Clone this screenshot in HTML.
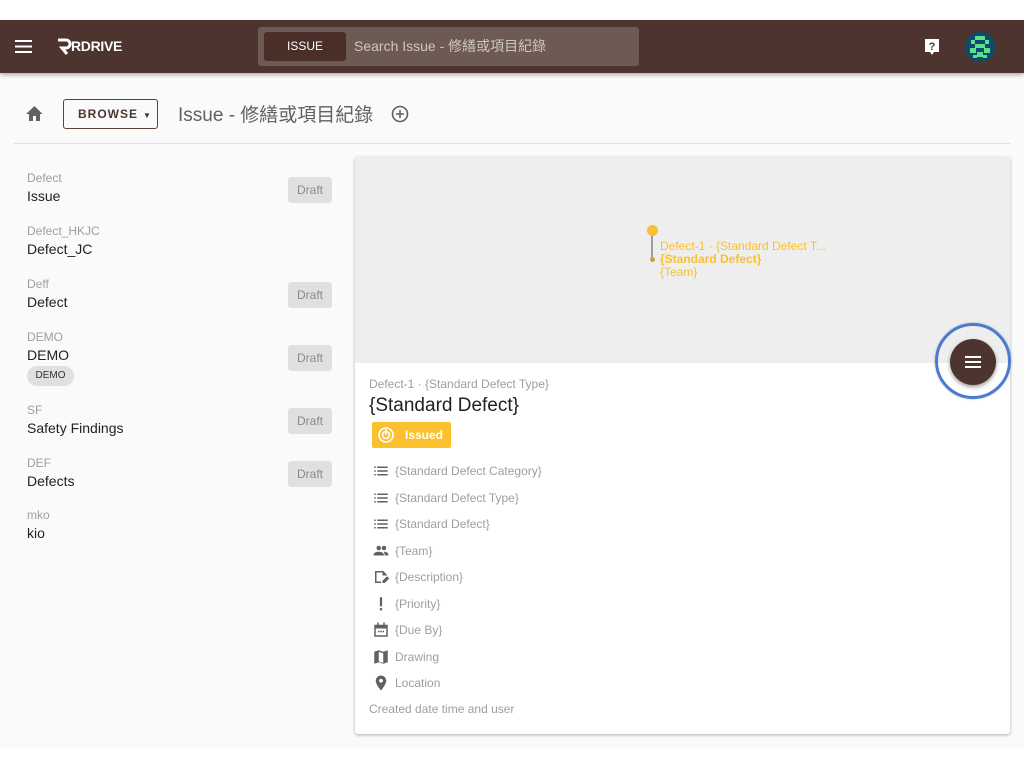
<!DOCTYPE html>
<html><head><meta charset="utf-8"><style>
*{box-sizing:border-box;margin:0;padding:0}
body{width:1024px;height:768px;background:#fff;font-family:"Liberation Sans","Noto Sans CJK TC",sans-serif;position:relative;overflow:hidden}
.page{position:absolute;top:20px;left:0;width:1024px;height:728px;background:#fafafa}
.hdr{position:absolute;top:0;left:0;width:1024px;height:53px;background:#4e342e;box-shadow:0 2px 4px rgba(0,0,0,.3)}
.abs{position:absolute}
.search{left:258px;top:7px;width:381px;height:39px;background:#6d5a52;border-radius:3px}
.issuebtn{left:6px;top:5px;width:82px;height:29px;background:#4a2f28;border-radius:3px;color:#fff;font-size:12px;text-align:center;line-height:29px}
.ph{left:96px;top:0;line-height:39px;color:#d0c6c2;font-size:14px}
.item .s{font-size:12px;color:#9e9e9e}
.item .m{font-size:14px;color:#212121;margin-top:3px}
.draft{position:absolute;left:288px;width:44px;height:26px;background:#e0e0e0;border-radius:3px;color:#8a8a8a;font-size:12px;text-align:center;line-height:26px}
.card{left:355px;top:137px;width:655px;height:577px;background:#fff;box-shadow:0 1px 3px rgba(0,0,0,.3);border-radius:3px;overflow:hidden}
.map{left:0;top:0;width:655px;height:206px;background:#eeeeee}
.row{position:absolute;left:17px;font-size:12px;color:#9e9e9e;display:flex;align-items:center}
.row svg{width:18px;height:18px;margin-right:5px;fill:#616161}
</style></head><body>
<div class="page">
<div class="hdr">
 <svg class="abs" style="left:15px;top:20px" width="17" height="13"><rect y="0" width="17" height="2" fill="#fff"/><rect y="5.5" width="17" height="2" fill="#fff"/><rect y="11" width="17" height="2" fill="#fff"/></svg>
 <svg class="abs" style="left:56px;top:17px" width="16" height="19" viewBox="0 0 16 19"><path d="M2 3h8a4 4 0 0 1 0 8H6l5 6" stroke="#fff" stroke-width="3" fill="none"/></svg>
 <div class="abs" style="left:71px;top:18px;color:#fff;font-size:14px;font-weight:bold;letter-spacing:-.3px">RDRIVE</div>
 <div class="abs search"><div class="abs issuebtn">ISSUE</div><div class="abs ph">Search Issue - 修繕或項目紀錄</div></div>
 <svg class="abs" style="left:924px;top:18px" width="16" height="18"><path d="M1 1h14v13h-5l-2 3-2-3H1z" fill="#fff"/><text x="8" y="12" font-size="11" font-weight="bold" text-anchor="middle" fill="#4e342e" font-family="Liberation Sans">?</text></svg>
 <svg class="abs" style="left:965px;top:12px" width="30" height="30"><circle cx="15" cy="15" r="15" fill="#0d4a6b"/><g fill="#5de08a"><rect x="10" y="4" width="10" height="4"/><rect x="6" y="8" width="4" height="4"/><rect x="20" y="8" width="4" height="4"/><rect x="10" y="12" width="10" height="4"/><rect x="5" y="16" width="6" height="5"/><rect x="19" y="16" width="6" height="5"/><rect x="12" y="20" width="6" height="5"/><rect x="8" y="23" width="4" height="3"/><rect x="18" y="23" width="4" height="3"/></g></svg>
</div>
<svg class="abs" style="left:26px;top:86px" width="17" height="15" viewBox="0 0 17 15"><path d="M7 15v-5h3v5h4V8h2.5L8.5 0 0 8h3v7z" fill="#616161"/></svg>
<div class="abs" style="left:63px;top:79px;width:95px;height:30px;border:1px solid #5d4037;border-radius:3px;font-size:12px;font-weight:bold;letter-spacing:1px;color:#4e342e;line-height:28px;padding-left:14px">BROWSE<span style="font-size:8px;margin-left:5px">▼</span></div>
<div class="abs" style="left:178px;top:80px;font-size:19px;color:#616161">Issue - 修繕或項目紀錄</div>
<svg class="abs" style="left:391px;top:85px" width="18" height="18"><circle cx="9" cy="9" r="7.5" stroke="#616161" stroke-width="1.6" fill="none"/><path d="M9 5v8M5 9h8" stroke="#616161" stroke-width="1.6"/></svg>
<div class="abs" style="left:14px;top:123px;width:996px;height:1px;background:#e0e0e0"></div>

<div class="abs item" style="left:27px;top:151px"><div class="s">Defect</div><div class="m">Issue</div></div>
<div class="draft" style="top:157px">Draft</div>
<div class="abs item" style="left:27px;top:204px"><div class="s">Defect_HKJC</div><div class="m">Defect_JC</div></div>
<div class="abs item" style="left:27px;top:257px"><div class="s">Deff</div><div class="m">Defect</div></div>
<div class="draft" style="top:262px">Draft</div>
<div class="abs item" style="left:27px;top:310px"><div class="s">DEMO</div><div class="m">DEMO</div><div style="margin-top:3px;width:47px;height:20px;border-radius:10px;background:#e0e0e0;font-size:10px;text-align:center;line-height:20px;color:#333">DEMO</div></div>
<div class="draft" style="top:325px">Draft</div>
<div class="abs item" style="left:27px;top:383px"><div class="s">SF</div><div class="m">Safety Findings</div></div>
<div class="draft" style="top:388px">Draft</div>
<div class="abs item" style="left:27px;top:436px"><div class="s">DEF</div><div class="m">Defects</div></div>
<div class="draft" style="top:441px">Draft</div>
<div class="abs item" style="left:27px;top:488px"><div class="s">mko</div><div class="m">kio</div></div>

<div class="abs card">
 <div class="abs map">
  <div class="abs" style="left:296px;top:75px;width:2px;height:27px;background:#9e9e9e"></div>
  <div class="abs" style="left:292px;top:68px;width:11px;height:11px;border-radius:50%;background:#fbc02d"></div>
  <div class="abs" style="left:295px;top:100px;width:5px;height:5px;border-radius:50%;background:#c8a040"></div>
  <div class="abs" style="left:305px;top:83px;font-size:12px;color:#fbc02d;line-height:13px">Defect-1 · {Standard Defect T...<br><b>{Standard Defect}</b><br>{Team}</div>
 </div>
 <div class="abs" style="left:14px;top:220px;font-size:12px;color:#9e9e9e">Defect-1 · {Standard Defect Type}</div>
 <div class="abs" style="left:14px;top:238px;font-size:19px;color:#212121">{Standard Defect}</div>
 <div class="abs" style="left:17px;top:265px;width:79px;height:26px;background:#fbc02d;border-radius:2px;color:#fff;font-size:12px;font-weight:bold;line-height:26px;padding-left:33px">Issued<svg class="abs" style="left:5px;top:4px" width="18" height="18"><circle cx="9" cy="9" r="7" stroke="#fff" stroke-width="1.6" fill="none"/><circle cx="9" cy="9" r="3.5" stroke="#fff" stroke-width="1.6" fill="none"/><rect x="8" y="0" width="2" height="9" fill="#fbc02d"/><rect x="8.2" y="1" width="1.6" height="8" fill="#fff"/></svg></div>
 <div class="row" style="top:305px"><svg viewBox="0 0 24 24"><path d="M3 6h2v2H3zm0 5h2v2H3zm0 5h2v2H3zM7 6h14v2H7zm0 5h14v2H7zm0 5h14v2H7z"/></svg>{Standard Defect Category}</div>
 <div class="row" style="top:332px"><svg viewBox="0 0 24 24"><path d="M3 6h2v2H3zm0 5h2v2H3zm0 5h2v2H3zM7 6h14v2H7zm0 5h14v2H7zm0 5h14v2H7z"/></svg>{Standard Defect Type}</div>
 <div class="row" style="top:358px"><svg viewBox="0 0 24 24"><path d="M3 6h2v2H3zm0 5h2v2H3zm0 5h2v2H3zM7 6h14v2H7zm0 5h14v2H7zm0 5h14v2H7z"/></svg>{Standard Defect}</div>
 <div class="row" style="top:385px"><svg viewBox="0 0 24 24"><circle cx="9" cy="8" r="3"/><circle cx="16" cy="8" r="3"/><path d="M2 18c0-4 4-5 7-5s7 1 7 5zm14-5c3 0 6 1 6 5h-5c0-2-1-4-1-5z"/></svg>{Team}</div>
 <div class="row" style="top:411px"><svg viewBox="0 0 24 24"><path d="M4 4h11l5 5v1h-2V10h-4V6H6v12h6v2H4zm10 16v-3l6-6 3 3-6 6z"/></svg>{Description}</div>
 <div class="row" style="top:438px"><svg viewBox="0 0 24 24"><rect x="10.5" y="3" width="3" height="12"/><rect x="10.5" y="17.5" width="3" height="3"/></svg>{Priority}</div>
 <div class="row" style="top:464px"><svg viewBox="0 0 24 24"><path d="M3 5h18v16H3zm2 5v9h14v-9zM7 2h2v4H7zm8 0h2v4h-2zM8 13h2v2H8zm3 0h2v2h-2zm3 0h2v2h-2z"/></svg>{Due By}</div>
 <div class="row" style="top:491px"><svg viewBox="0 0 24 24"><path d="M3 5l6-2 6 2 6-2v16l-6 2-6-2-6 2zm6 0v13l6 2V7z"/></svg>Drawing</div>
 <div class="row" style="top:517px"><svg viewBox="0 0 24 24"><path d="M12 2a7 7 0 0 0-7 7c0 5 7 13 7 13s7-8 7-13a7 7 0 0 0-7-7zm0 9.5A2.5 2.5 0 1 1 12 6.5a2.5 2.5 0 0 1 0 5z"/></svg>Location</div>
</div>
<div class="abs" style="left:369px;top:682px;font-size:12px;color:#9e9e9e">Created date time and user</div>
<div class="abs" style="left:935px;top:303px;width:76px;height:76px;border-radius:50%;border:3px solid #4a7bd0;box-shadow:0 0 2px rgba(0,0,0,.3)"></div>
<div class="abs" style="left:950px;top:319px;width:46px;height:46px;border-radius:50%;background:#4e342e;box-shadow:0 2px 4px rgba(0,0,0,.4)"><svg class="abs" style="left:15px;top:17px" width="16" height="12"><rect width="16" height="2" fill="#fff"/><rect y="5" width="16" height="2" fill="#fff"/><rect y="10" width="16" height="2" fill="#fff"/></svg></div>
</div>
</body></html>
